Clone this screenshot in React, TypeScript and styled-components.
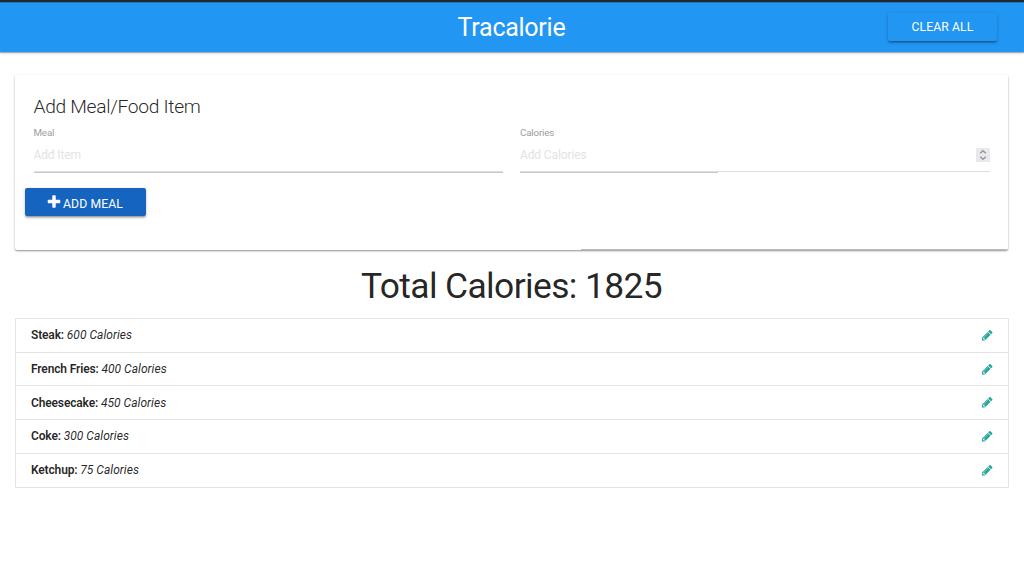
import React from 'react';
import styled, { createGlobalStyle } from 'styled-components';

const GlobalStyle = createGlobalStyle`
  * { box-sizing: border-box; }
  body {
    margin: 0;
    background: #fff;
    color: rgba(0, 0, 0, 0.87);
    font-family: Roboto, 'Liberation Sans', sans-serif;
    font-size: 12px;
    overflow: hidden;
  }
  h1, h2, ul, p { margin: 0; padding: 0; font-weight: 400; }
`;

const NavBar = styled.nav`
  display: grid;
  grid-template-columns: 1fr auto 1fr;
  align-items: start;
  height: 52px;
  padding: 0 27px;
  border-top: 2px solid #212630;
  background: #2196f3;
  color: #fff;
  box-shadow: inset 0 1px 0 #2175b5, 0 1px 1px rgba(0, 0, 0, 0.28), 0 2px 3px rgba(0, 0, 0, 0.08);
`;

const Brand = styled.h1`
  grid-column: 2;
  font-size: 25px;
  letter-spacing: -0.26px;
  line-height: 52px;
  height: 50px;
  margin-left: -1px;
`;

const Button = styled.button<{ $tone: string }>`
  display: inline-flex;
  align-items: center;
  justify-content: center;
  height: 28px;
  border: 0;
  border-radius: 2px;
  padding: 0;
  background: ${(p) => p.$tone};
  color: #fff;
  font: 400 12.2px/28px Roboto, 'Liberation Sans', sans-serif;
  letter-spacing: 0.1px;
  text-transform: uppercase;
  box-shadow: 0 1.5px 2px rgba(0, 0, 0, 0.2), 0 2px 1px -1px rgba(0, 0, 0, 0.16), 0 1px 4px rgba(0, 0, 0, 0.12);
`;

const ClearButton = styled(Button)`
  justify-self: end;
  width: 109px;
  margin-top: 11px;
`;

const AddButton = styled(Button)`
  width: 121px;
  margin: 15px 0 0 -9px;
  padding-right: 1px;
  gap: 1px;
`;

const ButtonLabel = styled.span`
  padding-top: 3px;
`;

const Page = styled.main`
  padding: 23px 16px 0 15px;
`;

const Card = styled.section`
  height: 175px;
  padding: 19px 18.5px 0 18.5px;
  border-radius: 2px;
  background: linear-gradient(#bdbdbd, #bdbdbd) right bottom / 427px 1px no-repeat;
  box-shadow: 0 1px 1.5px rgba(0, 0, 0, 0.32), 0 1px 3px rgba(0, 0, 0, 0.14);
`;

const CardTitle = styled.h2`
  font-size: 19.2px;
  font-weight: 300;
  letter-spacing: -0.3px;
  line-height: 25px;
`;

const Fields = styled.div`
  display: grid;
  grid-template-columns: 1fr 1fr;
  gap: 17px;
  padding-top: 6px;
`;

const Field = styled.label`
  display: block;
  color: #9e9e9e;
  font-size: 9.8px;
  letter-spacing: -0.18px;
  line-height: 15px;
`;

const InputBox = styled.div`
  display: flex;
  align-items: center;
  height: 31px;
  padding-bottom: 2px;
`;

const Input = styled.input`
  flex: 1;
  min-width: 0;
  padding: 0;
  border: 0;
  outline: 0;
  background: transparent;
  font: 400 12px/16px Roboto, 'Liberation Sans', sans-serif;
  letter-spacing: -0.12px;
  &::placeholder { color: #e3e3e3; opacity: 1; }
`;

const Underline = styled.div<{ $dark: string }>`
  height: 2px;
  border-top: 1px solid #dedede;
  background: linear-gradient(#c8c8c8, #c8c8c8) left / ${(p) => p.$dark} 100% no-repeat;
`;

const Spinner = styled.span`
  display: flex;
  align-items: center;
  justify-content: center;
  width: 14px;
  height: 14px;
  background: #e9e9ed;
`;

const Total = styled.h2`
  padding-top: 16px;
  font-size: 35.4px;
  letter-spacing: -0.62px;
  line-height: 40px;
  text-align: center;
`;

const List = styled.ul`
  margin: 12px -0.5px 0 0;
  list-style: none;
  border: 1px solid #e4e4e4;
  border-radius: 1px;
`;

const Row = styled.li`
  display: flex;
  align-items: center;
  justify-content: space-between;
  height: 33.7px;
  padding: 0 14.5px 0 15px;
  border-bottom: 1px solid #e4e4e4;
  letter-spacing: -0.15px;
  &:last-child { height: 33px; border-bottom: 0; }
`;

const MealName = styled.strong`
  font-weight: 600;
`;

const MealCalories = styled.em`
  letter-spacing: 0.03px;
`;

const meals = [
  { name: 'Steak', calories: 600 },
  { name: 'French Fries', calories: 400 },
  { name: 'Cheesecake', calories: 450 },
  { name: 'Coke', calories: 300 },
  { name: 'Ketchup', calories: 75 },
];

const PlusIcon = () => (
  <svg width="16" height="16" viewBox="0 0 1792 1792" fill="currentColor">
    <path d="M1600 736v192q0 40-28 68t-68 28h-416v416q0 40-28 68t-68 28h-192q-40 0-68-28t-28-68v-416h-416q-40 0-68-28t-28-68v-192q0-40 28-68t68-28h416v-416q0-40 28-68t68-28h192q40 0 68 28t28 68v416h416q40 0 68 28t28 68z" />
  </svg>
);

const PencilIcon = () => (
  <svg width="12.5" height="12.5" viewBox="0 0 1792 1792" fill="#26a69a">
    <path d="M491 1536l91-91-235-235-91 91v107h128v128h107zm523-928q0-22-22-22-10 0-17 7l-542 542q-7 7-7 17 0 22 22 22 10 0 17-7l542-542q7-7 7-17zm-54-192l416 416-832 832h-416v-416zm683 96q0 53-37 90l-166 166-416-416 166-165q36-38 90-38 53 0 91 38l235 234q37 39 37 91z" />
  </svg>
);

const StepperIcon = () => (
  <svg width="8" height="12" viewBox="0 0 8 12" fill="none" stroke="#96969c" strokeWidth="1.5">
    <path d="M1.2 4.2 4 1.8l2.8 2.4M1.2 7.8 4 10.2l2.8-2.4" />
  </svg>
);

export default function App() {
  const total = meals.reduce((sum, meal) => sum + meal.calories, 0);
  return (
    <>
      <GlobalStyle />
      <NavBar>
        <Brand>Tracalorie</Brand>
        <ClearButton $tone="#2196f3">Clear All</ClearButton>
      </NavBar>
      <Page>
        <Card>
          <CardTitle>Add Meal/Food Item</CardTitle>
          <Fields>
            <Field>
              Meal
              <InputBox><Input placeholder="Add Item" /></InputBox>
              <Underline $dark="100%" />
            </Field>
            <Field>
              Calories
              <InputBox>
                <Input placeholder="Add Calories" />
                <Spinner><StepperIcon /></Spinner>
              </InputBox>
              <Underline $dark="198px" />
            </Field>
          </Fields>
          <AddButton $tone="#1565c0"><PlusIcon /><ButtonLabel>Add Meal</ButtonLabel></AddButton>
        </Card>
        <Total>Total Calories: {total}</Total>
        <List>
          {meals.map((meal) => (
            <Row key={meal.name}>
              <span><MealName>{meal.name}:</MealName> <MealCalories>{meal.calories} Calories</MealCalories></span>
              <PencilIcon />
            </Row>
          ))}
        </List>
      </Page>
    </>
  );
}
